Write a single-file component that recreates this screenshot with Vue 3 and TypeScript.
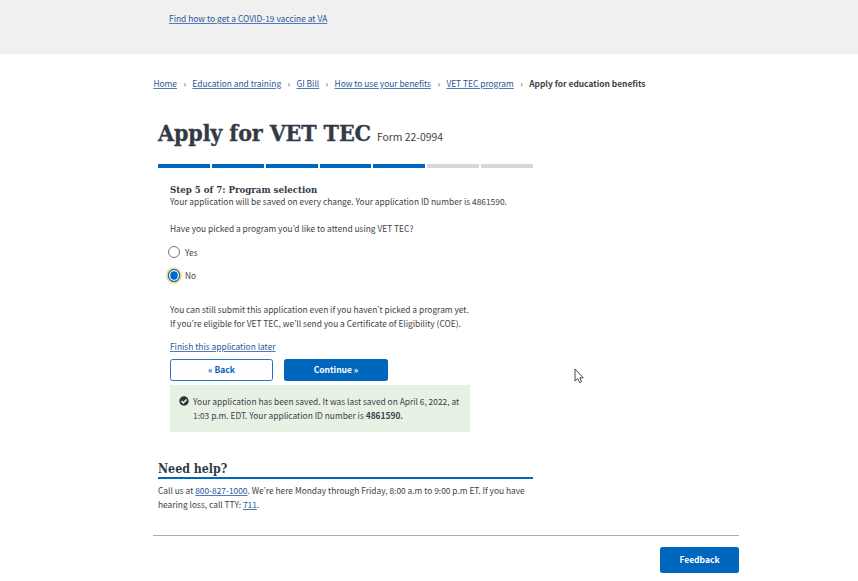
<template>
  <div class="page">
    <div class="promo">
      <a class="promo-link" href="#">Find how to get a COVID-19 vaccine at VA</a>
    </div>

    <div class="content">
      <nav class="breadcrumbs">
        <template v-for="crumb in crumbs" :key="crumb">
          <a href="#">{{ crumb }}</a>
          <span class="separator">›</span>
        </template>
        <strong>Apply for education benefits</strong>
      </nav>

      <main class="form-column">
        <div class="title-row">
          <h1>Apply for VET TEC</h1>
          <span class="form-number">Form 22-0994</span>
        </div>

        <div class="progress">
          <span
            v-for="step in totalSteps"
            :key="step"
            class="segment"
            :class="{ 'segment-done': step <= currentStep }"
          ></span>
        </div>

        <form class="form-body" @submit.prevent>
          <h2>Step {{ currentStep }} of {{ totalSteps }}: Program selection</h2>
          <p class="save-note">Your application will be saved on every change. Your application ID number is {{ applicationId }}.</p>
          <p class="question">Have you picked a program you’d like to attend using VET TEC?</p>

          <label v-for="option in options" :key="option" class="option">
            <input v-model="picked" type="radio" name="picked" :value="option" />
            <span class="radio" :class="{ 'radio-on': picked === option }"></span>
            <span>{{ option }}</span>
          </label>

          <div class="info">
            <p>You can still submit this application even if you haven’t picked a program yet.</p>
            <p>If you’re eligible for VET TEC, we’ll send you a Certificate of Eligibility (COE).</p>
          </div>

          <a class="finish" href="#">Finish this application later</a>

          <div class="buttons">
            <button type="button" class="btn btn-outline">« Back</button>
            <button type="submit" class="btn">Continue »</button>
          </div>

          <div class="alert">
            <svg class="alert-icon" viewBox="0 0 10 10">
              <circle cx="5" cy="5" r="4.7" fill="#2b333b" />
              <path d="M2.4 5 4.3 6.9 7.7 3.5" fill="none" stroke="#e7f4e4" stroke-width="1.5" />
            </svg>
            <div>
              <p>Your application has been saved. It was last saved on April 6, 2022, at</p>
              <p>1:03 p.m. EDT. Your application ID number is <strong>{{ applicationId }}.</strong></p>
            </div>
          </div>
        </form>

        <section class="help">
          <h3>Need help?</h3>
          <p class="help-first">Call us at <a href="#">800-827-1000</a>. We’re here Monday through Friday, 8:00 a.m to 9:00 p.m ET. If you have</p>
          <p>hearing loss, call TTY: <a href="#">711</a>.</p>
        </section>
      </main>

      <div class="footer">
        <button type="button" class="btn feedback">Feedback</button>
      </div>
    </div>

    <svg class="pointer" viewBox="0 0 10 16">
      <path
        d="M1 1V13L3.7 10.5 5.6 14.6 7.6 13.7 5.8 9.8H9.2Z"
        fill="#fff"
        stroke="#333"
        stroke-width="0.9"
      />
    </svg>
  </div>
</template>

<script setup lang="ts">
import { ref } from 'vue'

const crumbs: string[] = [
  'Home',
  'Education and training',
  'GI Bill',
  'How to use your benefits',
  'VET TEC program'
]

const totalSteps = 7
const currentStep = 5
const applicationId = '4861590'

const options = ['Yes', 'No']
const picked = ref('No')
</script>

<style>
body {
  margin: 0;
  background: #fff;
}
</style>

<style scoped>
.page {
  position: relative;
  height: 581px;
  overflow: hidden;
  font-family: "Noto Sans CJK KR", "Open Sans", sans-serif;
  font-size: 8.4px;
  line-height: 14px;
  color: #3d4248;
  white-space: nowrap;
}

p,
h1,
h2,
h3 {
  margin: 0;
}

h1,
h2,
h3 {
  font-family: "DejaVu Serif Condensed", "DejaVu Serif", serif;
  font-weight: 700;
  color: #323a45;
}

a {
  color: #2a5694;
  text-decoration: underline;
  text-decoration-color: #4a7dbb;
  text-underline-offset: 1px;
}

.promo {
  height: 43px;
  padding: 11px 0 0 169px;
  background: #f0f0f0;
}

.promo-link {
  display: block;
  letter-spacing: 0.02px;
}

.content {
  width: 586px;
  margin-left: 153px;
}

.breadcrumbs {
  display: flex;
  height: 15px;
  padding-top: 22px;
  padding-left: 0.4px;
}

.separator {
  width: 15.4px;
  text-align: center;
}

.form-column {
  width: 375px;
  margin-left: 5px;
}

.title-row {
  display: flex;
  align-items: baseline;
  gap: 6px;
  height: 36px;
  margin-top: 24px;
  line-height: 36px;
}

h1 {
  font-size: 23px;
  letter-spacing: -0.12px;
  -webkit-text-stroke: 0.3px #323a45;
}

.form-number {
  font-size: 10.4px;
}

.progress {
  display: flex;
  gap: 2px;
  margin-top: 13px;
}

.segment {
  flex: 1;
  height: 4px;
  background: #d6d7d9;
}

.segment-done {
  background: #0067be;
}

.form-body {
  width: 345px;
  padding: 15px 0 0 12px;
}

h2 {
  font-size: 9.6px;
  line-height: 14px;
}

.save-note {
  margin-top: -3px;
}

.question {
  margin-top: 13px;
  margin-bottom: 5px;
}

.option {
  display: flex;
  align-items: center;
  gap: 5px;
  height: 23.5px;
  margin-left: -2.5px;
}

.option input {
  position: absolute;
  opacity: 0;
}

.radio {
  box-sizing: border-box;
  width: 12.5px;
  height: 12.5px;
  border: 1px solid #777;
  border-radius: 50%;
  background: #fff;
}

.radio-on {
  border-color: #0067be;
  background: #0067be;
  box-shadow: inset 0 0 0 1.3px #fff, 0 0 0 1.8px #f4d58c;
}

.info {
  margin-top: 15px;
}

.finish {
  display: block;
  width: max-content;
  margin-top: 9px;
}

.buttons {
  display: flex;
  gap: 11px;
  margin-top: 6px;
}

.btn {
  box-sizing: border-box;
  width: 104px;
  height: 22px;
  padding: 0 0 2px;
  border: 0;
  border-radius: 2.5px;
  background: #0067be;
  color: #fff;
  font-family: inherit;
  font-size: 8.5px;
  font-weight: 700;
  line-height: 14px;
}

.btn-outline {
  width: 103px;
  border: 1.5px solid #1d77c4;
  background: #fff;
  color: #0067be;
}

.alert {
  box-sizing: border-box;
  display: flex;
  gap: 4px;
  width: 300px;
  height: 47px;
  margin-top: 4px;
  padding: 9px 0 0 9px;
  background: #e7f1e4;
}

.alert-icon {
  flex: none;
  width: 10px;
  height: 10px;
  margin-top: 2px;
}

.help {
  margin-top: 28px;
}

h3 {
  height: 17px;
  border-bottom: 2px solid #0067be;
  font-size: 12.3px;
  line-height: 17px;
}

.help-first {
  margin-top: 4px;
}

.footer {
  display: flex;
  justify-content: flex-end;
  margin-top: 24px;
  padding-top: 11px;
  border-top: 1px solid #a9adad;
}

.feedback {
  width: 79px;
  height: 26px;
}

.pointer {
  position: absolute;
  top: 368px;
  left: 573.5px;
  width: 10px;
  height: 16px;
}
</style>
